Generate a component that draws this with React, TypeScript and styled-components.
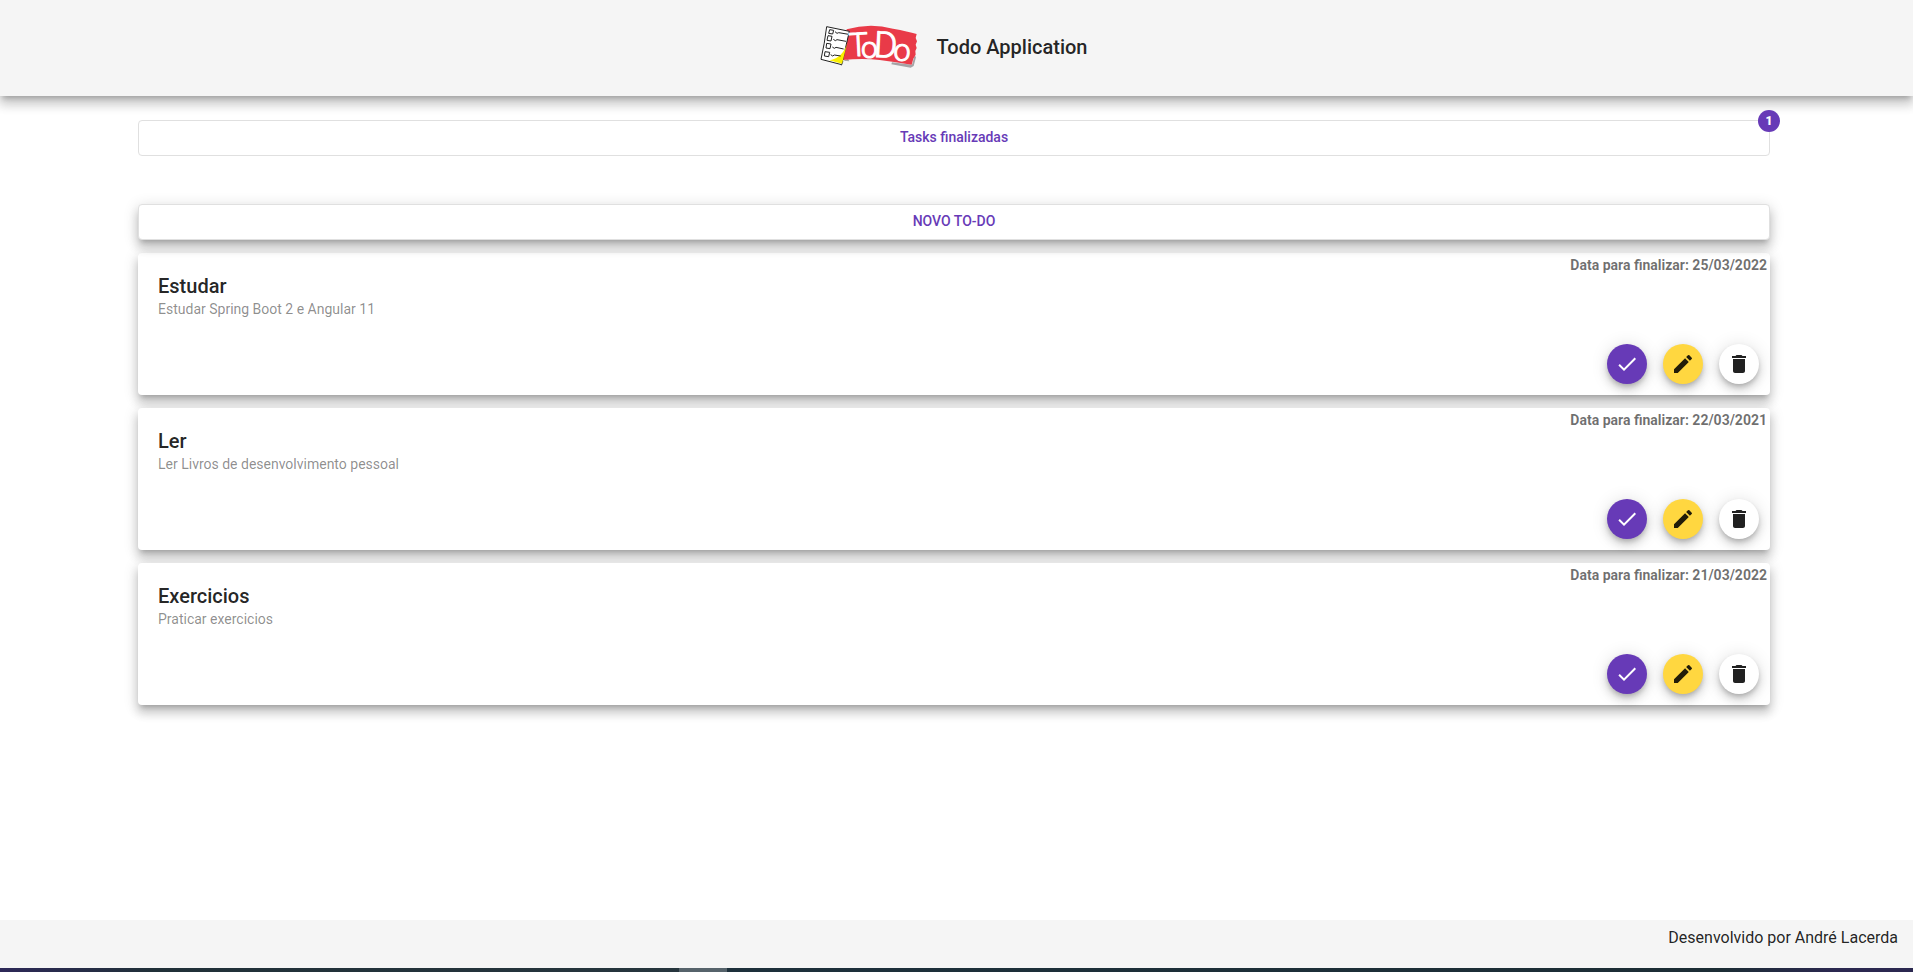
import React from "react";
import styled, { createGlobalStyle } from "styled-components";
import { MdDone, MdEdit, MdDelete } from "react-icons/md";

const elevation =
  "0 5px 5px -3px rgba(0,0,0,.2), 0 8px 10px 1px rgba(0,0,0,.14), 0 3px 14px 2px rgba(0,0,0,.12)";

const GlobalStyle = createGlobalStyle`
  * { box-sizing: border-box; }
  body {
    margin: 0;
    background: #fff;
    color: rgba(0, 0, 0, 0.87);
    font-family: Roboto, "Liberation Sans", sans-serif;
  }
`;

const Page = styled.div`
  display: flex;
  flex-direction: column;
  min-height: 100vh;
`;

const Header = styled.header`
  display: flex;
  align-items: center;
  justify-content: center;
  gap: 19px;
  height: 96px;
  padding: 0 6px 6px 0;
  background: #f5f5f5;
  box-shadow: ${elevation};
`;

const Logo = styled.svg`
  display: block;
  width: 98px;
  height: 48px;
  overflow: visible;
`;

const AppTitle = styled.h1`
  margin: 0;
  padding-top: 4px;
  font-size: 20px;
  font-weight: 500;
  line-height: 32px;
`;

const Main = styled.main`
  flex: 1;
  display: flex;
  flex-direction: column;
  padding: 24px 143px 24px 138px;
`;

const WideButton = styled.button<{ $raised?: boolean }>`
  position: relative;
  width: 100%;
  height: 36px;
  padding: 0 15px 2px;
  border: 1px solid #e0e0e0;
  border-radius: 4px;
  background: #fff;
  color: #673ab7;
  font-family: inherit;
  font-size: 14px;
  font-weight: 500;
  line-height: 32px;
  cursor: pointer;
  box-shadow: ${(p) => (p.$raised ? elevation : "none")};
`;

const Badge = styled.span`
  position: absolute;
  top: -11px;
  right: -11px;
  width: 22px;
  height: 22px;
  border-radius: 50%;
  background: #673ab7;
  color: #fff;
  font-size: 12px;
  font-weight: 900;
  line-height: 22px;
  text-align: center;
`;

const TaskSection = styled.section`
  display: flex;
  flex-direction: column;
  gap: 13px;
  margin-top: 48px;
`;

const Card = styled.article`
  display: flex;
  justify-content: space-between;
  min-height: 142px;
  border-radius: 4px;
  background: #fff;
  box-shadow: ${elevation};
`;

const CardText = styled.div`
  padding: 20px;
`;

const TaskTitle = styled.h2`
  margin: 0;
  font-size: 20px;
  font-weight: 500;
  line-height: 26px;
`;

const TaskDescription = styled.p`
  margin: 0;
  color: rgba(0, 0, 0, 0.46);
  font-size: 14px;
  font-weight: 400;
  line-height: 20px;
`;

const CardSide = styled.div`
  display: flex;
  flex-direction: column;
  align-items: flex-end;
  justify-content: space-between;
`;

const DueDate = styled.p`
  margin: 0;
  padding: 2px 3px;
  color: rgba(0, 0, 0, 0.57);
  font-size: 14px;
  font-weight: 700;
  line-height: 20px;
`;

const Actions = styled.div`
  display: flex;
  gap: 16px;
  padding: 0 11px 11px 0;
`;

const RoundButton = styled.button<{ $fill: string; $ink: string }>`
  display: flex;
  align-items: center;
  justify-content: center;
  width: 40px;
  height: 40px;
  padding: 0;
  border: 0;
  border-radius: 50%;
  background: ${(p) => p.$fill};
  color: ${(p) => p.$ink};
  font-size: 24px;
  cursor: pointer;
  box-shadow: 0 3px 5px -1px rgba(0, 0, 0, 0.2),
    0 6px 10px 0 rgba(0, 0, 0, 0.14), 0 1px 18px 0 rgba(0, 0, 0, 0.12);
`;

const Footer = styled.footer`
  height: 48px;
  padding: 6px 15px;
  background: #f5f5f5;
  font-size: 16px;
  line-height: 24px;
  text-align: right;
`;

const BottomStrip = styled.div`
  height: 4px;
  background: linear-gradient(90deg, #2d2858, #203038 8%, #26353d 35.5%, transparent 35.5%, transparent 38%, #1d303b 38%, #1c2d35 90%, #2b2850 96%) #56636b;
`;

const tasks = [
  { title: "Estudar", description: "Estudar Spring Boot 2 e Angular 11", due: "25/03/2022" },
  { title: "Ler", description: "Ler Livros de desenvolvimento pessoal", due: "22/03/2021" },
  { title: "Exercicios", description: "Praticar exercicios", due: "21/03/2022" },
];

const TodoLogo = () => (
  <Logo viewBox="16 3 294 144" role="img" aria-label="ToDo">
    <path d="M232 127 L292 134 L300 106 L304 112 L297 138 L288 143 L230 133Z" fill="#a5a3a6" />
    <path d="M74 130 L80 138 L88 122 L104 124 L100 116Z" fill="#a9a9a4" />
    <path
      d="M96 28 Q165 8 235 26 Q280 34 306 42 L303 54 L307 64 L303 74 L306 84 L302 93 L303 104 L296 116 L291 134 Q240 126 195 120 Q145 114 84 120Z"
      fill="#e93a48"
    />
    <path d="M36 20 L104 34 L81 134 L19 118 Q30 70 36 20Z" fill="#fff" stroke="#222" strokeWidth="3" strokeLinejoin="round" />
    <path d="M98 68 L82 131 L44 121 Q86 112 98 68Z" fill="#fcf000" />
    <g fill="none" stroke="#222" strokeWidth="3">
      <path d="M45 29l12 2-3 11-12-2z M40 47l12 2-3 14-12-2z M36 70l13 2-3 14-12-2z M31 95l14 2-3 13-13-2z" />
      <path d="M61 35l6 5 5-2 30 5 M56 58l6 4 5-3 27 5 M53 81l6 4 5-3 23 5 M48 104l6 4 5-3 19 3" />
    </g>
    <g fill="#fff" stroke="#fff" strokeWidth="3" strokeLinejoin="round" fontFamily="Roboto, sans-serif" fontWeight="300">
      <text x="102" y="108" fontSize="98" transform="rotate(-3 130 75)">T</text>
      <text x="139" y="113" fontSize="90">o</text>
      <text x="178" y="112" fontSize="108" transform="rotate(3 215 75)">D</text>
      <text x="236" y="122" fontSize="92" transform="rotate(3 262 98)">o</text>
    </g>
  </Logo>
);

export default function App() {
  return (
    <>
      <GlobalStyle />
      <Page>
        <Header>
          <TodoLogo />
          <AppTitle>Todo Application</AppTitle>
        </Header>
        <Main>
          <WideButton type="button">
            Tasks finalizadas
            <Badge>1</Badge>
          </WideButton>
          <TaskSection>
            <WideButton type="button" $raised>
              NOVO TO-DO
            </WideButton>
            {tasks.map((task) => (
              <Card key={task.title}>
                <CardText>
                  <TaskTitle>{task.title}</TaskTitle>
                  <TaskDescription>{task.description}</TaskDescription>
                </CardText>
                <CardSide>
                  <DueDate>Data para finalizar: {task.due}</DueDate>
                  <Actions>
                    <RoundButton type="button" aria-label="Finalizar" $fill="#673ab7" $ink="#fff">
                      <MdDone />
                    </RoundButton>
                    <RoundButton type="button" aria-label="Editar" $fill="#ffd740" $ink="rgba(0,0,0,.87)">
                      <MdEdit />
                    </RoundButton>
                    <RoundButton type="button" aria-label="Excluir" $fill="#fff" $ink="rgba(0,0,0,.87)">
                      <MdDelete />
                    </RoundButton>
                  </Actions>
                </CardSide>
              </Card>
            ))}
          </TaskSection>
        </Main>
        <Footer>Desenvolvido por André Lacerda</Footer>
        <BottomStrip />
      </Page>
    </>
  );
}
